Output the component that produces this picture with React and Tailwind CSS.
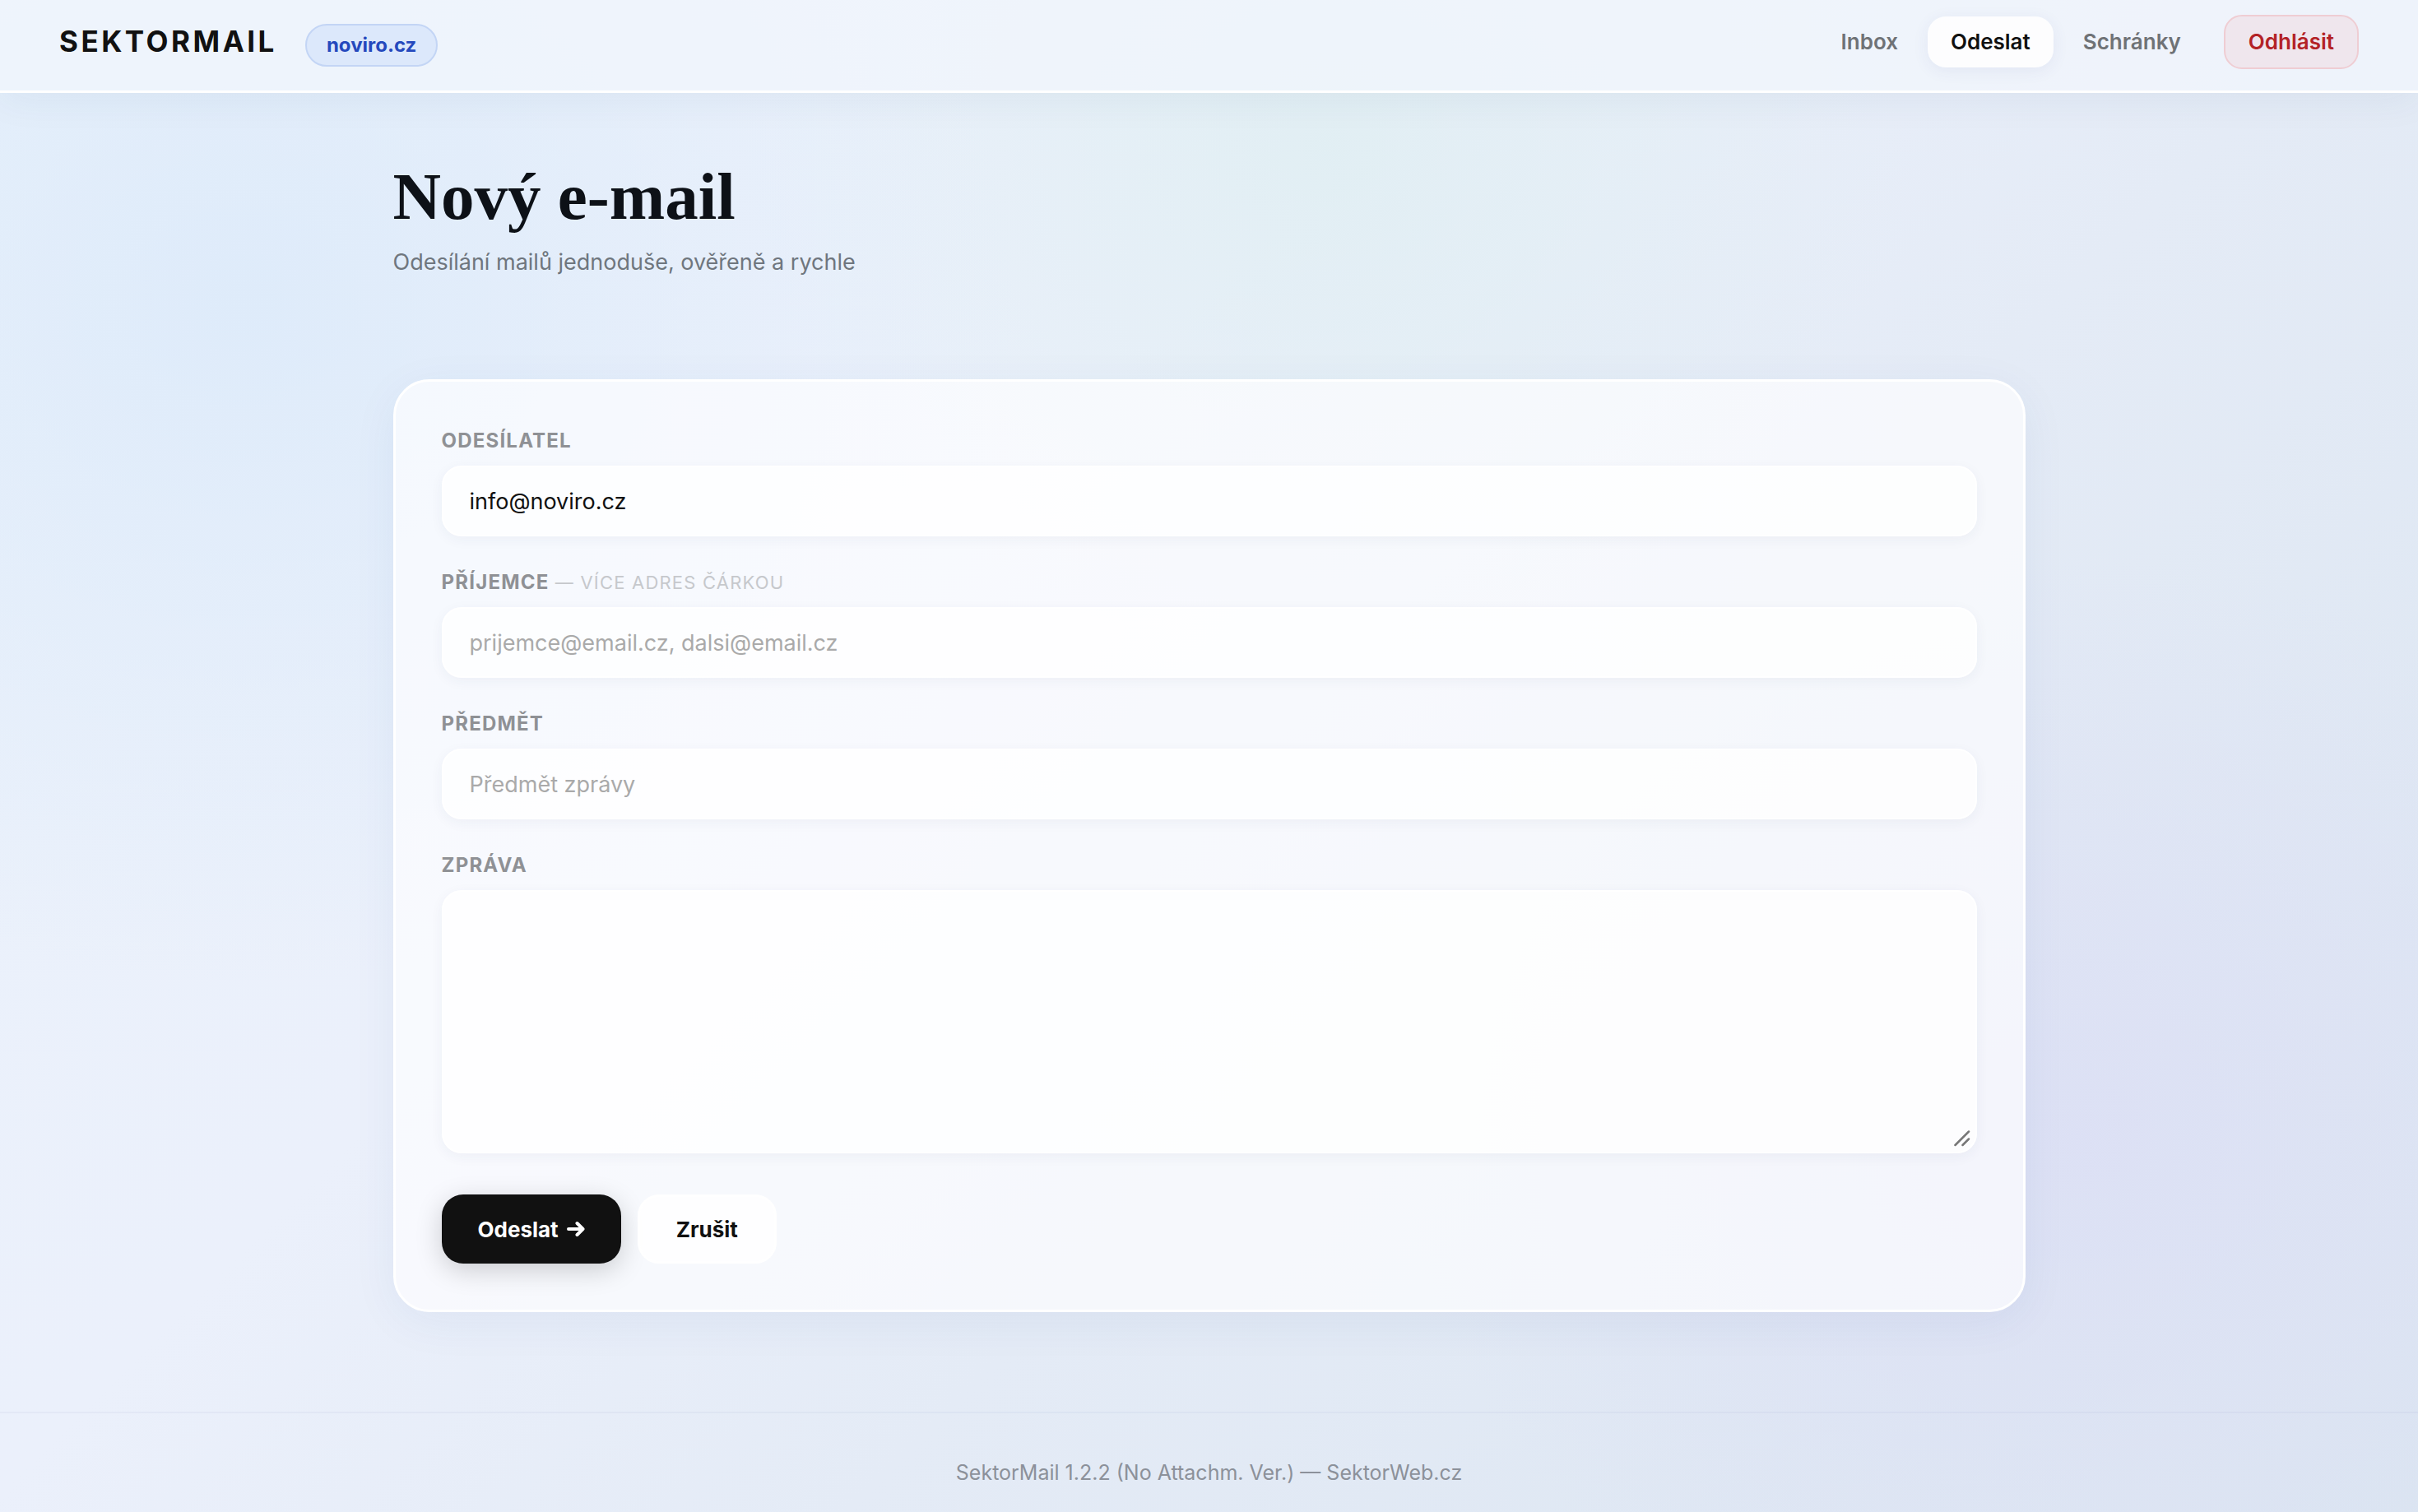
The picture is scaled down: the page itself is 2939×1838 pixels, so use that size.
import { useState } from "react";

const NAV = [
  { label: "Inbox", href: "#inbox" },
  { label: "Odeslat", href: "#compose", active: true },
  { label: "Schránky", href: "#mailboxes" },
];

const labelClass =
  "block text-[24px] leading-8 font-bold tracking-wider uppercase text-[#8f9195]";

const inputClass =
  "block w-full rounded-3xl border-2 border-white bg-white/80 px-8 text-[27px] text-[#111] placeholder:text-[#aaaaaa] shadow-[0_4px_16px_rgba(30,50,100,0.05)] outline-none focus:border-blue-300";

function Field({ id, label, hint, children }) {
  return (
    <div className="flex flex-col gap-3.5">
      <label htmlFor={id} className={labelClass}>
        {label}
        {hint && (
          <span className="text-[22px] font-normal text-[#c6c8cc]"> — {hint}</span>
        )}
      </label>
      {children}
    </div>
  );
}

function ArrowIcon() {
  return (
    <svg
      width="22"
      height="20"
      viewBox="0 0 22 20"
      fill="none"
      stroke="currentColor"
      strokeWidth="4"
      strokeLinecap="round"
      strokeLinejoin="round"
      aria-hidden="true"
    >
      <path d="M2 10h17M12.5 3l7 7-7 7" />
    </svg>
  );
}

function Header() {
  return (
    <header className="flex items-center justify-between border-b-[3px] border-white bg-[#f2f6fc]/75 px-[72px] pt-[18px] pb-[26px] shadow-[0_8px_48px_rgba(40,60,110,0.06)]">
      <div className="flex items-baseline gap-[34px] pt-2">
        <a href="#inbox" className="text-[35px] leading-none font-bold tracking-widest text-[#111]">
          SEKTORMAIL
        </a>
        <span className="rounded-full border-2 border-[#c3d5f5] bg-[#dce8fb] px-6 py-2 text-[24px] leading-8 font-bold text-[#2549bd]">
          noviro.cz
        </span>
      </div>

      <nav className="flex items-center gap-2 text-[26px] font-semibold">
        {NAV.map((item) => (
          <a
            key={item.label}
            href={item.href}
            aria-current={item.active ? "page" : undefined}
            className={
              item.active
                ? "rounded-[22px] bg-white/85 px-7 py-3 leading-[38px] text-[#111] shadow-[0_4px_20px_rgba(60,60,140,0.07)]"
                : "rounded-[22px] px-7 py-3 leading-[38px] text-[#6f7276]"
            }
          >
            {item.label}
          </a>
        ))}
        <button
          type="button"
          className="ml-4 rounded-[22px] border-2 border-[#efcdd3] bg-[#efe6ed] px-7 py-3 leading-[38px] text-[#b32226]"
        >
          Odhlásit
        </button>
      </nav>
    </header>
  );
}

export default function App() {
  const [from, setFrom] = useState("info@noviro.cz");
  const [to, setTo] = useState("");
  const [subject, setSubject] = useState("");
  const [message, setMessage] = useState("");

  const reset = () => {
    setTo("");
    setSubject("");
    setMessage("");
  };

  return (
    <div className="flex min-h-screen flex-col bg-[radial-gradient(ellipse_32%_45%_at_10%_20%,rgba(220,234,250,0.85),rgba(220,234,250,0)),radial-gradient(ellipse_24%_34%_at_55%_10%,rgba(222,238,241,0.75),rgba(222,238,241,0)),radial-gradient(ellipse_28%_38%_at_86%_75%,rgba(220,223,245,0.85),rgba(220,223,245,0)),linear-gradient(135deg,#eaf2fb_0%,#ebf0fb_38%,#e4ebf6_60%,#dbe5f1_100%)] font-[Inter,sans-serif]">
      <Header />

      <main className="mx-auto w-full max-w-[1984px] grow pt-[82px] pb-[120px]">
        <h1 className="font-['Liberation_Serif',serif] text-[81px] leading-[88px] font-bold text-[#0d1117]">
          Nový e-mail
        </h1>
        <p className="mt-4 text-[27px] leading-10 text-[#6f767e]">
          Odesílání mailů jednoduše, ověřeně a rychle
        </p>

        <form
          onSubmit={(e) => e.preventDefault()}
          className="mt-[122px] flex flex-col gap-10 rounded-[44px] border-[3px] border-white bg-[#fdfeff]/70 p-14 shadow-[0_12px_56px_rgba(40,70,130,0.06)]"
        >
          <Field id="from" label="Odesílatel">
            <input
              id="from"
              type="email"
              value={from}
              onChange={(e) => setFrom(e.target.value)}
              className={`${inputClass} h-[86px]`}
            />
          </Field>

          <Field id="to" label="Příjemce" hint="více adres čárkou">
            <input
              id="to"
              type="text"
              value={to}
              onChange={(e) => setTo(e.target.value)}
              placeholder="prijemce@email.cz, dalsi@email.cz"
              className={`${inputClass} h-[86px]`}
            />
          </Field>

          <Field id="subject" label="Předmět">
            <input
              id="subject"
              type="text"
              value={subject}
              onChange={(e) => setSubject(e.target.value)}
              placeholder="Předmět zprávy"
              className={`${inputClass} h-[86px]`}
            />
          </Field>

          <Field id="message" label="Zpráva">
            <div className="relative">
              <textarea
                id="message"
                value={message}
                onChange={(e) => setMessage(e.target.value)}
                className={`${inputClass} h-80 resize-none py-6`}
              />
              <svg
                className="pointer-events-none absolute right-2 bottom-2 text-[#777]"
                width="20"
                height="20"
                viewBox="0 0 20 20"
                fill="none"
                stroke="currentColor"
                strokeWidth="2.5"
                strokeLinecap="round"
                aria-hidden="true"
              >
                <path d="M1.5 18L18 1.5M10.5 18l7.5-7.5" />
              </svg>
            </div>
          </Field>

          <div className="mt-2.5 flex gap-5 text-[26px] font-bold">
            <button
              type="submit"
              className="flex h-[84px] items-center gap-2.5 rounded-[26px] bg-[#111] px-11 text-white shadow-[0_8px_32px_rgba(0,0,0,0.18)]"
            >
              Odeslat
              <ArrowIcon />
            </button>
            <button
              type="button"
              onClick={reset}
              className="h-[84px] rounded-[26px] border-[3px] border-white bg-white/85 px-11 text-[#111]"
            >
              Zrušit
            </button>
          </div>
        </form>
      </main>

      <footer className="border-t-2 border-[#a0aacd]/10 px-6 pt-[54px] pb-[30px] text-center text-[25px] leading-9 text-[#8c919a]">
        SektorMail 1.2.2 (No Attachm. Ver.) — SektorWeb.cz
      </footer>
    </div>
  );
}
